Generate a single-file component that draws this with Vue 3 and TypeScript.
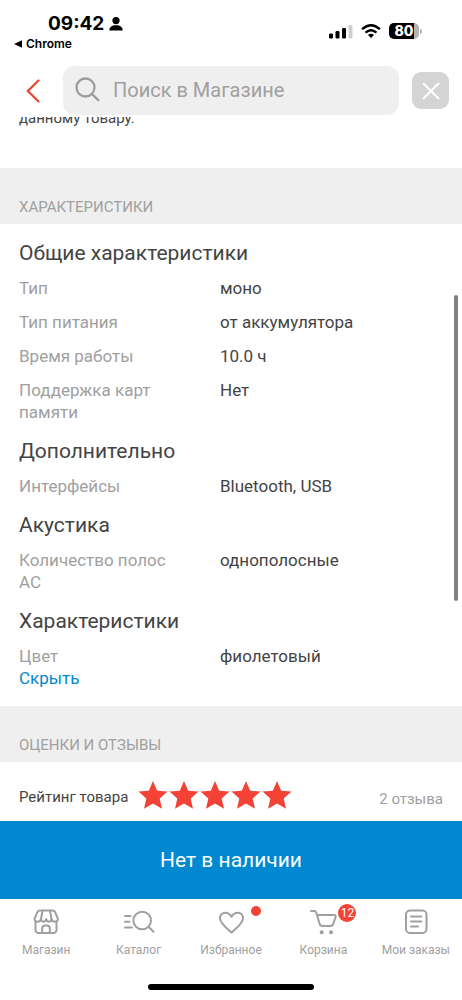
<script setup lang="ts">
import { ref } from 'vue'

interface Spec { label: string; value: string }
interface Group { title: string; specs: Spec[] }
interface Tab { id: string; label: string; dot?: boolean; count?: number }

const query = ref('')

const groups: Group[] = [
  {
    title: 'Общие характеристики',
    specs: [
      { label: 'Тип', value: 'моно' },
      { label: 'Тип питания', value: 'от аккумулятора' },
      { label: 'Время работы', value: '10.0 ч' },
      { label: 'Поддержка карт памяти', value: 'Нет' },
    ],
  },
  { title: 'Дополнительно', specs: [{ label: 'Интерфейсы', value: 'Bluetooth, USB' }] },
  { title: 'Акустика', specs: [{ label: 'Количество полос АС', value: 'однополосные' }] },
  { title: 'Характеристики', specs: [{ label: 'Цвет', value: 'фиолетовый' }] },
]

const tabs: Tab[] = [
  { id: 'shop', label: 'Магазин' },
  { id: 'catalog', label: 'Каталог' },
  { id: 'favorites', label: 'Избранное', dot: true },
  { id: 'cart', label: 'Корзина', count: 12 },
  { id: 'orders', label: 'Мои заказы' },
]
</script>

<template>
  <div class="screen">
    <header class="top">
      <div class="status">
        <div class="status-left">
          <div class="clock">
            <span>09:42</span>
            <svg width="14" height="14" viewBox="0 0 14 14" aria-hidden="true">
              <circle cx="7" cy="3.600" r="3.600" />
              <path d="M.3 13.500c0-3.300 2.400-5.300 6.700-5.300s6.700 2 6.700 5.300z" />
            </svg>
          </div>
          <a class="back-app" href="#">
            <svg width="8" height="8" viewBox="0 0 8 8" aria-hidden="true"><path d="M0 4 8 .3v7.400z" /></svg>
            <span>Chrome</span>
          </a>
        </div>
        <div class="status-right">
          <svg width="24" height="16" viewBox="0 0 24 16" aria-hidden="true">
            <rect x="0" y="10.500" width="4" height="5" rx="1.200" />
            <rect x="6.500" y="8" width="4" height="7.500" rx="1.200" />
            <rect x="13" y="5" width="4" height="10.500" rx="1.200" />
            <rect x="19.500" y="2" width="4" height="13.500" rx="1.200" fill="#cfcfcf" />
          </svg>
          <svg width="20" height="16" viewBox="0 0 22 16" fill="none" stroke="#000" stroke-width="2.700" aria-hidden="true">
            <path d="M1.200 6Q11-2.600 20.800 6" />
            <path d="M5 9.800q6-5.300 12 0" />
            <path d="M11 15.600 7.700 12.400q3.300-2.600 6.600 0z" fill="#000" stroke="none" />
          </svg>
          <div class="battery">
            <span class="battery-body">80</span>
            <span class="battery-cap"></span>
          </div>
        </div>
      </div>
      <div class="bar">
        <button class="back" type="button" aria-label="Назад">
          <svg width="14" height="24" viewBox="0 0 14 24" fill="none" stroke="#e9432f" stroke-width="2.200" stroke-linecap="round" aria-hidden="true">
            <path d="M12.500 1.500 1.800 12l10.700 10.500" />
          </svg>
        </button>
        <label class="search">
          <svg width="26" height="26" viewBox="0 0 26 26" fill="none" stroke="#9d9d9d" stroke-width="2.300" stroke-linecap="round" aria-hidden="true">
            <circle cx="10.500" cy="10.500" r="9" />
            <path d="m17.300 17.300 6 5.800" />
          </svg>
          <input v-model="query" type="text" placeholder="Поиск в Магазине" aria-label="Поиск в Магазине" />
        </label>
        <button class="clear" type="button" aria-label="Закрыть">
          <svg width="18" height="18" viewBox="0 0 18 18" fill="none" stroke="#fff" stroke-width="2" stroke-linecap="round" aria-hidden="true">
            <path d="m1.500 1.500 15 15m0-15-15 15" />
          </svg>
        </button>
      </div>
    </header>

    <main class="content">
      <p class="note">данному товару.</p>
      <h2 class="band">ХАРАКТЕРИСТИКИ</h2>
      <section class="specs">
        <div v-for="g in groups" :key="g.title" class="group">
          <h3>{{ g.title }}</h3>
          <dl>
            <div v-for="s in g.specs" :key="s.label" class="spec">
              <dt>{{ s.label }}</dt>
              <dd>{{ s.value }}</dd>
            </div>
          </dl>
        </div>
        <button class="toggle" type="button">Скрыть</button>
      </section>
      <h2 class="band">ОЦЕНКИ И ОТЗЫВЫ</h2>
      <section class="rating">
        <span class="rating-label">Рейтинг товара</span>
        <span class="stars" role="img" aria-label="5 из 5">
          <svg v-for="n in 5" :key="n" width="30" height="30" viewBox="0 0 30 30" aria-hidden="true">
            <path d="m15 1 4.200 9.700 10.300.9-7.800 6.900 2.300 10.300-9-5.400-9 5.400 2.300-10.300L.5 11.600l10.300-.9z" fill="#f44336" />
          </svg>
        </span>
        <a class="reviews" href="#">2 отзыва</a>
      </section>
      <div class="scrollbar"></div>
    </main>

    <footer class="bottom">
      <button class="buy" type="button">Нет в наличии</button>
      <nav class="tabs">
        <a v-for="t in tabs" :key="t.id" class="tab" href="#">
          <span class="icon">
            <svg width="28" height="28" viewBox="0 0 28 28" fill="none" stroke="#a0a0a0" stroke-width="2" stroke-linecap="round" stroke-linejoin="round" aria-hidden="true">
              <template v-if="t.id === 'shop'">
                <path d="M8 2.500h12.500c1.200 0 2 .5 2.500 1.500l2.700 6c.8 2-.7 3.700-2.700 3.700s-3.200-1-3.500-2.700c-.3 1.700-1.400 2.700-2.700 2.700s-2.300-1-2.600-2.700c-.3 1.700-1.300 2.700-2.600 2.700S9.200 12.700 9 11c-.3 1.700-1.500 2.700-3.500 2.700S2 12 2.800 10l2.700-6c.5-1 1.300-1.500 2.500-1.500z" />
                <path d="M10.500 2.800 9 11M18 2.800l1.500 8.200" />
                <path d="M3.500 13.500V22a3 3 0 0 0 3 3h15a3 3 0 0 0 3-3v-8.500" />
                <path d="M10.200 24.500v-4.300a2.700 2.700 0 0 1 2.700-2.700h2.200a2.700 2.700 0 0 1 2.700 2.700v4.300" />
              </template>
              <template v-else-if="t.id === 'catalog'">
                <circle cx="17.200" cy="12.500" r="8.800" />
                <path d="m23.500 18.800 5 5M0 8h5.500M0 13.800h4.500M0 19.500h7" />
              </template>
              <path v-else-if="t.id === 'favorites'" d="M14.500 24.500C10.500 21 3 15.500 3 10.300 3 7 5.300 4.700 8.200 4.700c2.800 0 5 1.700 6.300 4 1.300-2.300 3.500-4 6.300-4 2.900 0 5.200 2.300 5.200 5.600 0 5.200-7.500 10.700-11.500 14.200z" />
              <template v-else-if="t.id === 'cart'">
                <path d="M2 3h3.300c1 0 1.600.6 1.900 1.500l3.300 11c.4 1.500 1.300 2.500 3 2.500h7.800c1.600 0 2.600-.9 3.100-2.500l2.200-6.500c.4-1.200-.2-2-1.500-2H8" />
                <circle cx="12.700" cy="24.200" r="2" fill="#a0a0a0" stroke="none" />
                <circle cx="22" cy="24.200" r="2" fill="#a0a0a0" stroke="none" />
              </template>
              <template v-else>
                <rect x="4" y="2.500" width="20.500" height="22.500" rx="4" />
                <path d="M9 8.500h10.500M9 13.500h10.500M9 18.500h7" />
              </template>
            </svg>
            <span v-if="t.dot" class="dot"></span>
            <span v-if="t.count" class="count">{{ t.count }}</span>
          </span>
          <span>{{ t.label }}</span>
        </a>
      </nav>
      <div class="home"></div>
    </footer>
  </div>
</template>

<style>
body { margin: 0; background: #fff; }
</style>

<style scoped>
.screen {
  display: flex;
  flex-direction: column;
  min-height: 100vh;
  font-family: Roboto, "Noto Sans", sans-serif;
  color: #444;
  background: #fff;
}
.screen * { box-sizing: border-box; }
button { border: 0; padding: 0; background: none; font: inherit; cursor: pointer; }
a { color: inherit; text-decoration: none; }
svg { display: block; flex: none; overflow: visible; }
h2, h3, p, dl, dd { margin: 0; font-weight: 400; }

.top { position: relative; z-index: 1; background: #fff; padding-bottom: 2px; }
.status {
  display: flex;
  justify-content: space-between;
  height: 66px;
  padding: 12px 44px 0 14px;
  font-family: Inter, sans-serif;
  color: #000;
}
.clock { display: flex; align-items: center; gap: 5px; padding-left: 34px; font-size: 19px; line-height: 24px; font-weight: 700; }
.back-app { display: flex; align-items: center; gap: 4px; font-size: 12px; line-height: 16px; font-weight: 600; }
.status-right { display: flex; align-items: center; align-self: flex-start; gap: 8px; padding-top: 11px; }
.battery { display: flex; align-items: center; gap: 1px; }
.battery-body {
  width: 30px;
  border-radius: 5px;
  background: linear-gradient(to right, #000 25px, #b5b5b5 25px);
  color: #fff;
  font-size: 14px;
  line-height: 16px;
  font-weight: 800;
  text-align: center;
}
.battery-cap { width: 2px; height: 5px; margin-right: -4px; border-radius: 0 2px 2px 0; background: #b5b5b5; }

.bar { display: flex; align-items: center; padding: 0 13px 0 14px; }
.back { display: flex; justify-content: center; width: 38px; margin-right: 11px; }
.search {
  display: flex;
  flex: 1;
  align-items: center;
  gap: 12px;
  min-width: 0;
  height: 49px;
  padding: 0 12px 2px;
  border-radius: 12px;
  background: #efefef;
}
.search input {
  flex: 1;
  min-width: 0;
  border: 0;
  padding: 0;
  outline: 0;
  background: none;
  font: inherit;
  font-size: 20px;
  color: #444;
}
.search input::placeholder { color: #a0a0a0; opacity: 1; }
.clear {
  display: flex;
  align-items: center;
  justify-content: center;
  width: 37px;
  height: 37px;
  margin-left: 13px;
  border-radius: 9px;
  background: #d4d4d4;
}

.content { position: relative; flex: 1; }
.note { margin-top: -10px; padding: 0 19px 39px; font-size: 15px; line-height: 22px; }
.band {
  padding: 27px 19px 5px;
  background: #efefef;
  color: #a0a0a0;
  font-size: 15px;
  line-height: 24px;
}
.specs { padding: 15px 19px 17px; font-size: 17px; line-height: 22px; }
.group + .group { margin-top: 14px; }
.group h3 { margin-bottom: 9px; font-size: 21px; line-height: 29px; }
.group dl { display: grid; gap: 12px; }
.spec { display: grid; grid-template-columns: 160px 1fr; column-gap: 41px; }
.spec dt { color: #a0a0a0; }
.toggle { display: block; color: #0088cc; }

.rating { display: flex; align-items: center; height: 59px; padding: 0 19px; font-size: 15px; }
.rating-label { margin-top: 10px; }
.stars { display: flex; gap: 1px; margin: 6px 0 0 10px; }
.reviews { margin: 14px 0 0 auto; color: #a0a0a0; }
.scrollbar { position: absolute; top: 178px; right: 4px; width: 4px; height: 306px; border-radius: 2px; background: #808080; }

.buy { display: block; width: 100%; height: 78px; background: #0088d1; color: #fff; font-size: 21px; }
.tabs { display: grid; grid-template-columns: repeat(5, 1fr); padding-top: 9px; }
.tab { display: flex; flex-direction: column; align-items: center; gap: 6px; color: #a0a0a0; font-size: 12px; line-height: 16px; white-space: nowrap; }
.icon { position: relative; }
.dot { position: absolute; top: -2px; right: -16px; width: 10px; height: 10px; border-radius: 50%; background: #f44336; }
.count {
  position: absolute;
  top: -4px;
  right: -19px;
  width: 18px;
  height: 18px;
  border-radius: 50%;
  background: #f44336;
  color: #fff;
  font-size: 12px;
  line-height: 18px;
  text-align: center;
}
.home { width: 166px; height: 6px; margin: 26px auto 10px; border-radius: 3px; background: #000; }
</style>
